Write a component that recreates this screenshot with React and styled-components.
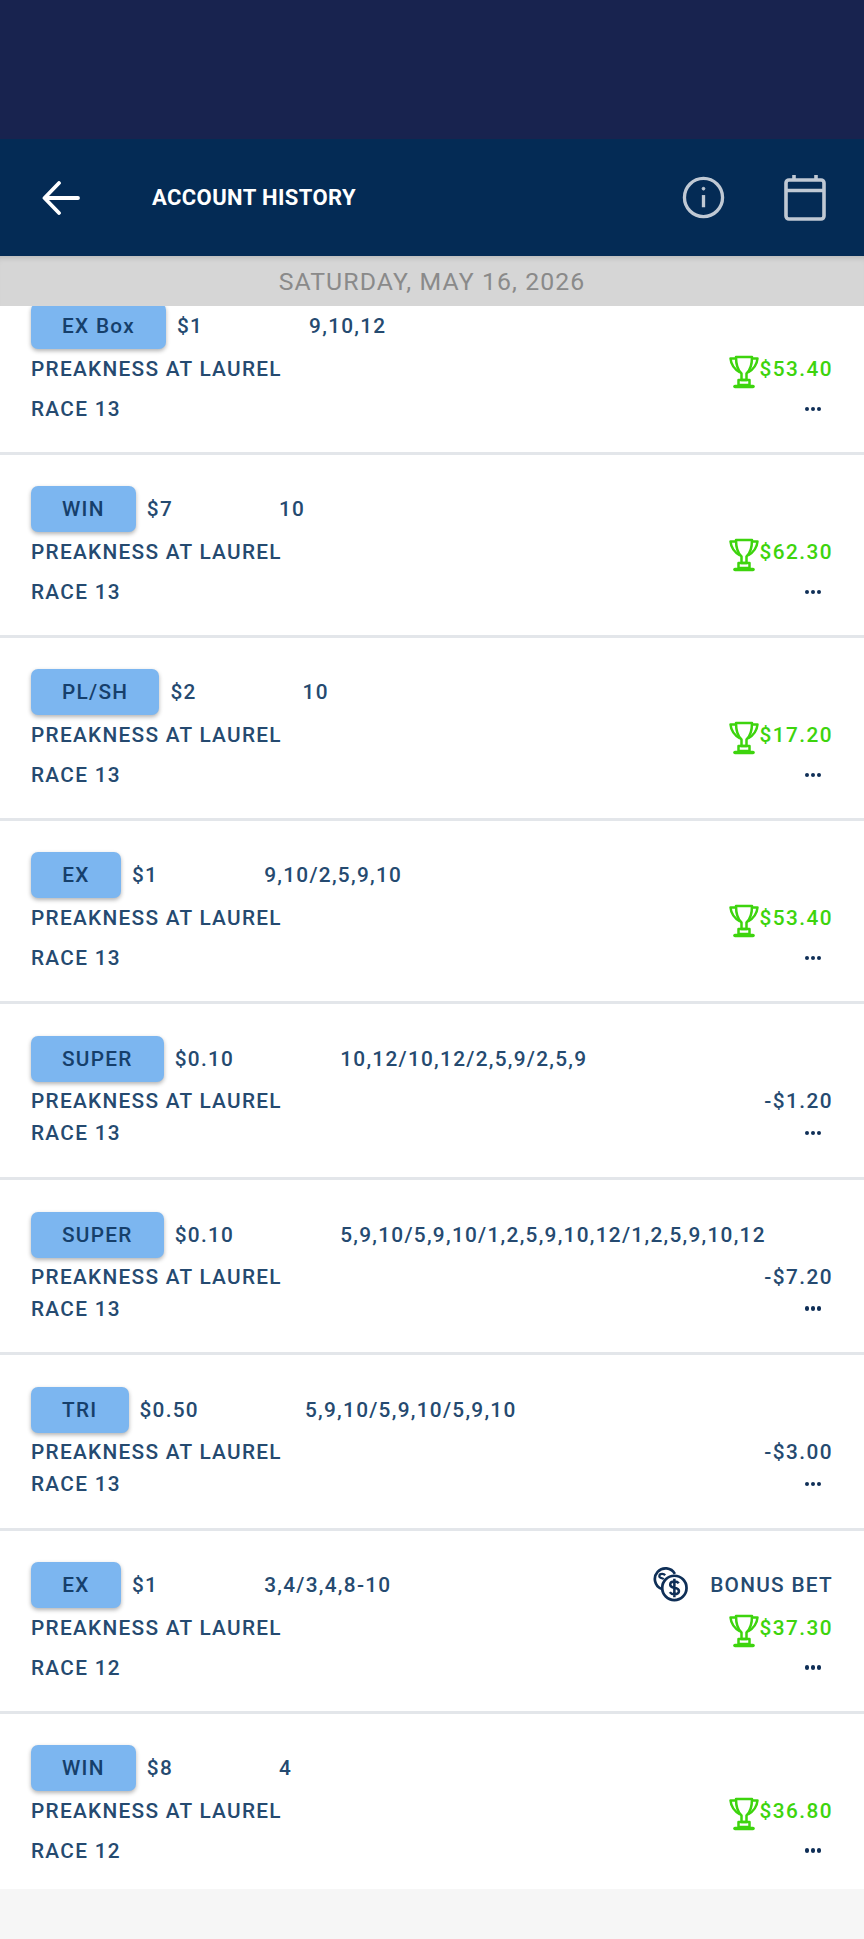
import React from 'react'
import styled, { createGlobalStyle } from 'styled-components'

const bets = [
  { type: 'EX Box', amount: '$1', picks: '9,10,12', race: 'RACE 13', result: '$53.40', won: true },
  { type: 'WIN', amount: '$7', picks: '10', race: 'RACE 13', result: '$62.30', won: true },
  { type: 'PL/SH', amount: '$2', picks: '10', race: 'RACE 13', result: '$17.20', won: true },
  { type: 'EX', amount: '$1', picks: '9,10/2,5,9,10', race: 'RACE 13', result: '$53.40', won: true },
  { type: 'SUPER', amount: '$0.10', picks: '10,12/10,12/2,5,9/2,5,9', race: 'RACE 13', result: '-$1.20' },
  { type: 'SUPER', amount: '$0.10', picks: '5,9,10/5,9,10/1,2,5,9,10,12/1,2,5,9,10,12', race: 'RACE 13', result: '-$7.20' },
  { type: 'TRI', amount: '$0.50', picks: '5,9,10/5,9,10/5,9,10', race: 'RACE 13', result: '-$3.00' },
  { type: 'EX', amount: '$1', picks: '3,4/3,4,8-10', race: 'RACE 12', result: '$37.30', won: true, bonus: true },
  { type: 'WIN', amount: '$8', picks: '4', race: 'RACE 12', result: '$36.80', won: true },
]

export default function App() {
  return (
    <Page>
      <GlobalStyle />
      <StatusBar />
      <Header>
        <BackButton>
          <svg width="38" height="34" viewBox="0 0 38 34" fill="none" stroke="#fff" strokeWidth="3.8" strokeLinecap="round" strokeLinejoin="round">
            <path d="M36 17H3M17 2 2.500 17 17 32" />
          </svg>
        </BackButton>
        <Title>ACCOUNT HISTORY</Title>
        <HeaderIcons>
          <svg width="43" height="43" viewBox="0 0 44 44" fill="none" stroke="#c0c9d4" strokeWidth="3.400">
            <circle cx="22" cy="22" r="19.500" />
            <path d="M22 19.500V32" />
            <circle cx="22" cy="13" r="1.400" fill="#c0c9d4" strokeWidth="1" />
          </svg>
          <svg width="44" height="48" viewBox="0 0 44 48" fill="none" stroke="#c0c9d4" strokeWidth="3.600">
            <rect x="3" y="6" width="38" height="39" rx="3" />
            <path d="M3 16.500h38M11 1v6M33 1v6" />
          </svg>
        </HeaderIcons>
      </Header>
      <DateBar>SATURDAY, MAY 16, 2026</DateBar>
      <List>
        {bets.map((bet, i) => (
          <Row key={i} $won={bet.won}>
            <TopLine $won={bet.won}>
              <Badge>{bet.type}</Badge>
              <Amount>{bet.amount}</Amount>
              <Picks>{bet.picks}</Picks>
              {bet.bonus && (
                <Bonus>
                  <CoinsIcon />
                  BONUS BET
                </Bonus>
              )}
            </TopLine>
            <InfoLine $won={bet.won}>
              <span>PREAKNESS AT LAUREL</span>
              <Result $won={bet.won}>
                {bet.won && <TrophyIcon />}
                {bet.result}
              </Result>
            </InfoLine>
            <InfoLine $won={bet.won}>
              <span>{bet.race}</span>
              <Dots>
                <i />
                <i />
                <i />
              </Dots>
            </InfoLine>
          </Row>
        ))}
      </List>
    </Page>
  )
}

function TrophyIcon() {
  return (
    <TrophySvg width="30" height="34" viewBox="0 0 30 34" fill="none" stroke="#3dd40d" strokeWidth="2.500" strokeLinejoin="round">
      <path d="M7 2h16c0 8-1.500 13-5.500 16.500V25h-5v-6.500C8.500 15 7 10 7 2Z" />
      <path d="M7 3.500H1.500c.5 6 3.500 10.500 9.500 14M23 3.500h5.500c-.5 6-3.500 10.500-9.500 14" />
      <path d="M9.500 25h11v5h-11Z" />
      <path d="M6 31.500h18" strokeWidth="3.600" strokeLinecap="round" />
    </TrophySvg>
  )
}

function CoinsIcon() {
  return (
    <svg width="36" height="35" viewBox="0 0 36 36" fill="none" stroke="#0f2f57" strokeWidth="2.800">
      <path d="M9 22.500A11 11 0 1 1 23 7" />
      <circle cx="22.500" cy="21.500" r="12.500" />
      <path d="M27 16.800c-1-1.300-2.500-1.800-4.500-1.800-2.500 0-4.300 1.100-4.300 3.200 0 4.500 9 2 9 6.500 0 2.100-2 3.300-4.700 3.300-2 0-3.700-.7-4.700-2.200M22.500 12v19" strokeWidth="2.600" />
      <path d="M13 8.500c-.7-1-1.700-1.400-3-1.400-1.700 0-3 .8-3 2.300 0 2 3 2 4.500 3" strokeWidth="2.300" />
    </svg>
  )
}

const GlobalStyle = createGlobalStyle`
  html, body {
    margin: 0;
    padding: 0;
    background: #f6f6f6;
  }
  * {
    box-sizing: border-box;
  }
`

const Page = styled.div`
  width: 864px;
  height: 1939px;
  overflow: hidden;
  display: flex;
  flex-direction: column;
  background: #f6f6f6;
  font-family: Roboto, 'Liberation Sans', sans-serif;
`

const StatusBar = styled.div`
  height: 139px;
  flex: none;
  background: #18234f;
`

const Header = styled.header`
  height: 117px;
  flex: none;
  display: flex;
  align-items: center;
  padding: 0 37px 0 42px;
  background: #042b55;
`

const BackButton = styled.div`
  width: 110px;
  flex: none;
  display: flex;
  align-items: center;
`

const Title = styled.div`
  flex: 1;
  color: #fff;
  font-size: 22px;
  font-weight: 700;
  letter-spacing: 0.4px;
`

const HeaderIcons = styled.div`
  display: flex;
  align-items: center;
  gap: 58px;
`

const DateBar = styled.div`
  position: relative;
  z-index: 1;
  height: 50px;
  flex: none;
  display: flex;
  align-items: center;
  justify-content: center;
  background: #d6d6d6;
  box-shadow: inset 0 6px 6px -5px rgba(0, 0, 0, 0.18);
  color: #8a8a8a;
  font-size: 24.800px;
  letter-spacing: 1.100px;
`

const List = styled.div`
  margin-top: -34px;
`

const Row = styled.div`
  height: ${p => (p.$won ? '183px' : '175.500px')};
  padding: ${p => (p.$won ? '31px' : '32px')} 31px 0;
  background: #fff;
  border-bottom: 3px solid #e3e6ea;
  color: #254a70;
  font-size: 20.800px;
  font-weight: 500;
  letter-spacing: 1.280px;

  &:last-child {
    height: 175.500px;
    border-bottom: none;
  }
`

const TopLine = styled.div`
  height: 46px;
  margin-bottom: ${p => (p.$won ? '0' : '3px')};
  display: flex;
  align-items: center;
`

const Badge = styled.div`
  min-width: 90px;
  height: 46px;
  padding: 0 31px;
  display: flex;
  align-items: center;
  justify-content: center;
  flex: none;
  border-radius: 7px;
  background: #7cb6f0;
  box-shadow: 0 2px 4px rgba(0, 0, 0, 0.3);
  color: #163f6b;
`

const Amount = styled.span`
  margin-left: 11px;
  margin-right: 106px;
`

const Picks = styled.span``

const Bonus = styled.span`
  margin-left: auto;
  display: flex;
  align-items: center;
  gap: 22px;
`

const InfoLine = styled.div`
  height: ${p => (p.$won ? '40px' : '32px')};
  display: flex;
  align-items: center;
  justify-content: space-between;
`

const Result = styled.span`
  position: relative;
  letter-spacing: 1.450px;
  color: ${p => (p.$won ? '#3dd40d' : '#254a70')};
`

const TrophySvg = styled.svg`
  position: absolute;
  right: 100%;
  top: -2px;
`

const Dots = styled.span`
  display: flex;
  gap: 1.500px;
  margin-right: 12px;

  i {
    width: 4.500px;
    height: 4.500px;
    border-radius: 50%;
    background: #0f2f57;
  }
`
